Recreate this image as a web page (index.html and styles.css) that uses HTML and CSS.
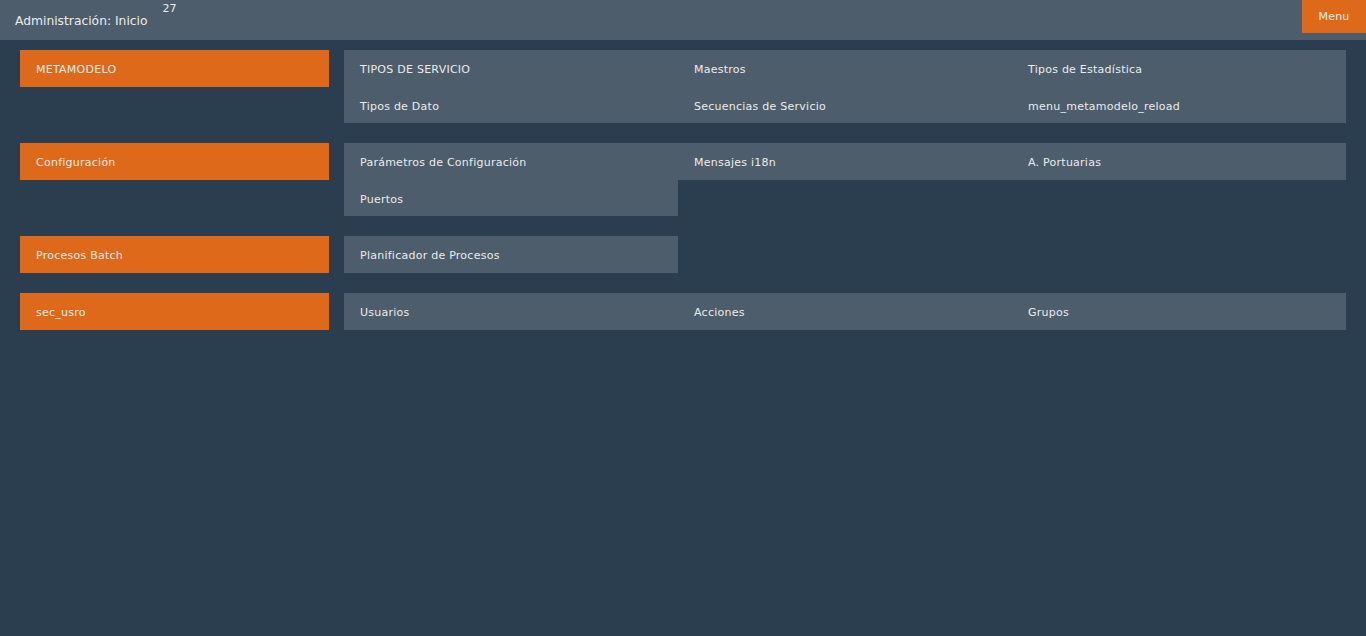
FILE: index.html
```html
<!DOCTYPE html>
<html lang="es">
<head>
<meta charset="utf-8">
<title>Administración: Inicio</title>
<link rel="stylesheet" href="styles.css">
</head>
<body>
<header class="topbar">
  <div class="title">Administración: Inicio <sup class="count">27</sup></div>
  <button class="menu-btn">Menu</button>
</header>
<main class="sections">
  <section class="group">
    <div class="group-label">METAMODELO</div>
    <ul class="items">
      <li>TIPOS DE SERVICIO</li>
      <li>Maestros</li>
      <li>Tipos de Estadística</li>
      <li>Tipos de Dato</li>
      <li>Secuencias de Servicio</li>
      <li>menu_metamodelo_reload</li>
    </ul>
  </section>
  <section class="group">
    <div class="group-label">Configuración</div>
    <ul class="items">
      <li>Parámetros de Configuración</li>
      <li>Mensajes i18n</li>
      <li>A. Portuarias</li>
      <li>Puertos</li>
    </ul>
  </section>
  <section class="group">
    <div class="group-label">Procesos Batch</div>
    <ul class="items">
      <li>Planificador de Procesos</li>
    </ul>
  </section>
  <section class="group">
    <div class="group-label">sec_usro</div>
    <ul class="items">
      <li>Usuarios</li>
      <li>Acciones</li>
      <li>Grupos</li>
    </ul>
  </section>
</main>
</body>
</html>
```
FILE: styles.css
```css
html, body {
  margin: 0;
  padding: 0;
}
body {
  background: #2b3e50;
  color: #ebebeb;
  font-family: "DejaVu Sans", Verdana, sans-serif;
  font-size: 11px;
  letter-spacing: 0.25px;
  min-height: 636px;
}
.topbar {
  height: 40px;
  background: #4e5d6c;
  display: flex;
  justify-content: space-between;
  align-items: flex-start;
}
.title {
  font-size: 12.3px;
  letter-spacing: 0;
  padding: 13px 0 0 15px;
  line-height: 16px;
}
.count {
  font-size: 11px;
  vertical-align: top;
  position: relative;
  top: -12px;
  margin-left: 11px;
}
.menu-btn {
  width: 64px;
  height: 33px;
  border: 0;
  background: #df691a;
  color: #ebebeb;
  font-family: inherit;
  font-size: 11px;
  letter-spacing: 0.25px;
  padding: 0;
  cursor: pointer;
}
.sections {
  padding: 10px 20px 0 20px;
}
.group {
  display: flex;
  align-items: flex-start;
  gap: 15px;
  margin-bottom: 20px;
}
.group-label {
  width: 309px;
  height: 37px;
  line-height: 37px;
  padding: 1px 0 0 16px;
  box-sizing: border-box;
  background: #df691a;
  flex: none;
}
.items {
  list-style: none;
  margin: 0;
  padding: 0;
  display: flex;
  flex-wrap: wrap;
  width: 1002px;
}
.items li {
  width: 334px;
  height: 36.5px;
  line-height: 37px;
  padding: 1px 0 0 16px;
  box-sizing: border-box;
  background: #4e5d6c;
}
```
